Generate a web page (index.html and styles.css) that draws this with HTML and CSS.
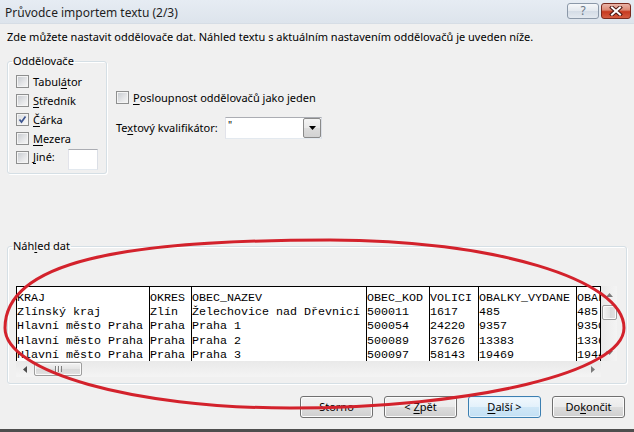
FILE: index.html
```html
<!DOCTYPE html>
<html lang="cs">
<head>
<meta charset="utf-8">
<title>Průvodce importem textu</title>
<link rel="stylesheet" href="styles.css">
</head>
<body>
<div class="window">
  <div class="titlebar">
    <span class="title">Průvodce importem textu (2/3)</span>
    <div class="caption-buttons">
      <span class="cap-btn help">?</span>
      <span class="cap-btn close"><svg width="14" height="10" viewBox="0 0 14 10"><path d="M3 1.5 L11 8.5 M11 1.5 L3 8.5" stroke="#4a1510" stroke-width="4" stroke-linecap="square"/><path d="M3 1.5 L11 8.5 M11 1.5 L3 8.5" stroke="#ffffff" stroke-width="2" stroke-linecap="square"/></svg></span>
    </div>
  </div>
  <div class="client">
    <p class="intro">Zde můžete nastavit oddělovače dat. Náhled textu s aktuálním nastavením oddělovačů je uveden níže.</p>
    <div class="options">
      <fieldset class="group delims">
        <legend>Oddělovače</legend>
        <div class="delims-body">
          <div class="check"><span class="box"></span><span>Tabul<u>á</u>tor</span></div>
          <div class="check"><span class="box"></span><span><u>S</u>tředník</span></div>
          <div class="check"><span class="box checked"><svg width="11" height="11" viewBox="0 0 11 11"><path d="M2.5 5.5 L4.5 8 L8.5 2.5" fill="none" stroke="#3d5590" stroke-width="1.7"/></svg></span><span><u>Č</u>árka</span></div>
          <div class="check"><span class="box"></span><span><u>M</u>ezera</span></div>
          <div class="check other"><span class="box"></span><span><u>J</u>iné:</span><span class="textbox"></span></div>
        </div>
      </fieldset>
      <div class="side">
        <div class="check"><span class="box"></span><span><u>P</u>osloupnost oddělovačů jako jeden</span></div>
        <div class="qualifier">
          <span class="qual-label">Te<u>x</u>tový kvalifikátor:</span>
          <div class="combo">
            <span class="combo-value">"</span>
            <span class="combo-btn"><svg width="7" height="4" viewBox="0 0 7 4"><path d="M0 0 H7 L3.5 4 Z" fill="#000"/></svg></span>
          </div>
        </div>
      </div>
    </div>
    <fieldset class="group preview">
      <legend>Náh<u>l</u>ed dat</legend>
      <div class="preview-body">
        <div class="grid-frame">
          <div class="data">
            <div class="col c1">KRAJ
Zlínský kraj
Hlavní město Praha
Hlavní město Praha
Hlavní město Praha</div>
            <div class="col c2">OKRES
Zlín
Praha
Praha
Praha</div>
            <div class="col c3">OBEC_NAZEV
Želechovice nad Dřevnicí
Praha 1
Praha 2
Praha 3</div>
            <div class="col c4">OBEC_KOD
500011
500054
500089
500097</div>
            <div class="col c5">VOLICI
1617
24220
37626
58143</div>
            <div class="col c6">OBALKY_VYDANE
485
9357
13383
19469</div>
            <div class="col c7">OBAL
485
9350
1336
1944</div>
          </div>
          <div class="vscroll">
            <span class="arrow"><svg width="7" height="4" viewBox="0 0 7 4"><path d="M0 4 H7 L3.5 0 Z" fill="#7a7a7a"/></svg></span>
            <span class="vthumb"></span>
            <span class="arrow down"><svg width="7" height="4" viewBox="0 0 7 4"><path d="M0 0 H7 L3.5 4 Z" fill="#7a7a7a"/></svg></span>
          </div>
          <div class="hscroll">
            <span class="arrow"><svg width="4" height="7" viewBox="0 0 4 7"><path d="M4 0 V7 L0 3.5 Z" fill="#4d4d4d"/></svg></span>
            <span class="hthumb"><span class="grip"></span></span>
            <span class="arrow right"><svg width="4" height="7" viewBox="0 0 4 7"><path d="M0 0 V7 L4 3.5 Z" fill="#7a7a7a"/></svg></span>
          </div>
          <div class="corner"></div>
        </div>
      </div>
    </fieldset>
    <div class="footer">
      <span class="btn">Storno</span>
      <span class="btn">&lt;&nbsp;<u>Z</u>pět</span>
      <span class="btn default"><u>D</u>alší&nbsp;&gt;</span>
      <span class="btn">Do<u>k</u>ončit</span>
    </div>
  </div>
  <svg class="markup" width="634" height="432" viewBox="0 0 634 432"><path d="M330 240 C492 240 624 279 624 328 C624 372 474 408 290 408 C133 408 5 372 5 328 C5 262 120 240 330 240 Z" fill="none" stroke="#d3222c" stroke-width="3"/></svg>
</div>
</body>
</html>
```

FILE: styles.css
```css
* { box-sizing: border-box; }
html, body { margin: 0; padding: 0; }
body {
  width: 634px;
  height: 432px;
  overflow: hidden;
  background: #f0f0f0;
  font-family: "Noto Sans", "Segoe UI", sans-serif;
  font-size: 11px;
  color: #000;
}
u { text-decoration: underline; text-underline-offset: 2px; text-decoration-thickness: 1px; }

.window {
  position: relative;
  width: 634px;
  height: 432px;
  display: flex;
  flex-direction: column;
  background: #f0f0f0;
  border-bottom: 3px solid #4e4e4e;
}

.titlebar {
  height: 24px;
  flex: none;
  display: flex;
  justify-content: space-between;
  align-items: flex-start;
  padding: 0 3px 0 5px;
  background: linear-gradient(#e6ecf3, #dde4ec);
  border-bottom: 1px solid #d6dde5;
}
.title { margin-top: 5px; line-height: 16px; font-size: 12px; color: #1e1e1e; }
.caption-buttons { display: flex; gap: 2px; margin-top: 3px; }
.cap-btn {
  height: 16px;
  display: flex;
  align-items: center;
  justify-content: center;
  border-radius: 3px;
}
.help {
  width: 32px;
  border: 1px solid #8b98a8;
  background: linear-gradient(#f6f8fa 0%, #e4e9ef 48%, #d4dce6 52%, #e3e9f0 100%);
  color: #6a7788;
  font-size: 12px;
  line-height: 14px;
}
.close {
  width: 30px;
  border: 1px solid #7a2a1e;
  background: linear-gradient(#eab4a8 0%, #dc8a76 42%, #c7391f 55%, #d45c41 100%);
}

.client { flex: 1; display: flex; flex-direction: column; padding: 0 7px; }
.intro { margin: 5px 0 0; line-height: 16px; }

.options { display: flex; margin-top: 8px; }

.group {
  margin: 0;
  padding: 0;
  min-width: 0;
  border: 1px solid #d5dfe5;
  border-radius: 3px;
  box-shadow: inset 1px 1px 0 #ffffff, 1px 1px 0 #ffffff;
}
.group legend { margin-left: 4px; padding: 0 1px; line-height: 16px; }

.delims { width: 100px; flex: none; }
.delims-body { padding: 3px 8px 6px 8px; }

.check { display: flex; align-items: center; gap: 4px; height: 19px; white-space: nowrap; }
.box {
  width: 13px;
  height: 13px;
  flex: none;
  border: 1px solid #8e8f8f;
  background: linear-gradient(135deg, #c4c8cd 0%, #e6e7e9 60%, #f7f7f7 100%);
  box-shadow: inset 0 0 0 1px #f4f4f4;
  display: flex;
  align-items: center;
  justify-content: center;
}
.box.checked { background: linear-gradient(135deg, #d6d9dd 0%, #eeeff0 60%, #fafafa 100%); }
.box svg { display: block; }
.other { align-items: flex-start; }
.other .box { margin-top: 3px; }
.other > span:nth-child(2) { line-height: 16px; margin-top: 1px; }
.textbox {
  margin-left: auto;
  margin-top: 1px;
  width: 30px;
  height: 21px;
  background: #fff;
  border: 1px solid #abadb3;
  border-left-color: #e2e3ea;
  border-right-color: #dbdfe6;
  border-bottom-color: #e3e9ef;
}

.side { margin-left: 9px; padding-top: 35px; }
.qualifier { display: flex; align-items: center; margin-top: 10px; }
.qual-label { width: 109px; line-height: 16px; }
.combo {
  width: 97px;
  height: 22px;
  display: flex;
  justify-content: space-between;
  background: #fff;
  border: 1px solid #abadb3;
  border-left-color: #e2e3ea;
  border-right-color: #dbdfe6;
  border-bottom-color: #e3e9ef;
}
.combo-value { padding-left: 2px; line-height: 14px; font-size: 10px; color: #000; }
.combo-btn {
  width: 18px;
  height: 20px;
  display: flex;
  align-items: center;
  justify-content: center;
  border: 1px solid #8a8a8a;
  border-radius: 2px;
  background: linear-gradient(#f4f4f4 0%, #e8e8e8 50%, #dcdcdc 50%, #d2d2d2 100%);
}

.preview { margin-top: 64px; }
.preview-body { padding: 32px 8px 6px 8px; }
.grid-frame {
  width: 601px;
  display: grid;
  grid-template-columns: 585px 16px;
  grid-template-rows: 75px 16px;
}
.data {
  display: flex;
  overflow: hidden;
  background: #fff;
  border-top: 1px solid #000;
  border-right: 1px solid #000;
}
.col {
  flex: none;
  height: 100%;
  overflow: hidden;
  border-left: 1px solid #000;
  padding-top: 4px;
  white-space: pre;
  font-family: "Liberation Mono", "Courier New", monospace;
  font-size: 11.67px;
  line-height: 14.2px;
}
.c1 { width: 133px; }
.c2 { width: 42px; }
.c3 { width: 175px; }
.c4 { width: 63px; }
.c5 { width: 49px; }
.c6 { width: 98px; }
.c7 { width: 24px; }

.vscroll {
  display: flex;
  flex-direction: column;
  align-items: center;
  background: linear-gradient(90deg, #e9e9e9, #f4f4f4);
}
.vscroll .arrow { height: 17px; display: flex; align-items: center; justify-content: center; }
.vscroll .arrow.down { margin-top: auto; height: 17px; }
.vthumb {
  margin-top: 2px;
  width: 15px;
  height: 15px;
  border: 1px solid #9d9d9d;
  border-radius: 2px;
  background: linear-gradient(90deg, #f4f4f4, #e4e4e4 50%, #d8d8d8 51%, #e2e2e2);
  box-shadow: inset 0 0 0 1px #fafafa;
}
.hscroll {
  display: flex;
  align-items: center;
  background: linear-gradient(#e9e9e9, #f4f4f4);
}
.hscroll .arrow { width: 17px; display: flex; justify-content: center; }
.hscroll .arrow.right { margin-left: auto; }
.hthumb {
  margin-left: 1px;
  width: 48px;
  height: 14px;
  border: 1px solid #9d9d9d;
  border-radius: 2px;
  background: linear-gradient(#f4f4f4, #e4e4e4 50%, #d8d8d8 51%, #e2e2e2);
  box-shadow: inset 0 0 0 1px #fafafa;
  display: flex;
  align-items: center;
  justify-content: center;
}
.grip { width: 7px; height: 6px; background: repeating-linear-gradient(90deg, #7f7f7f 0 1px, #f6f6f6 1px 2px, transparent 2px 3px); }
.corner { background: #f0f0f0; }

.footer { display: flex; justify-content: flex-end; gap: 11px; margin-top: 12px; padding-right: 2px; }
.btn {
  width: 73px;
  height: 22px;
  display: flex;
  align-items: center;
  justify-content: center;
  border: 1px solid #707070;
  border-radius: 3px;
  background: linear-gradient(#f2f2f2 0%, #ebebeb 50%, #dddddd 50%, #cfcfcf 100%);
  box-shadow: inset 0 0 0 1px #fcfcfc;
  line-height: 16px;
  white-space: pre;
}
.btn.default {
  border-color: #3c7fb1;
  background: linear-gradient(#f1f8fd 0%, #e3f1fb 50%, #cfe7f7 50%, #c3e0f4 100%);
  box-shadow: inset 0 0 0 1px #e4f3fd;
}

.markup { position: absolute; left: 0; top: 0; pointer-events: none; }
```
